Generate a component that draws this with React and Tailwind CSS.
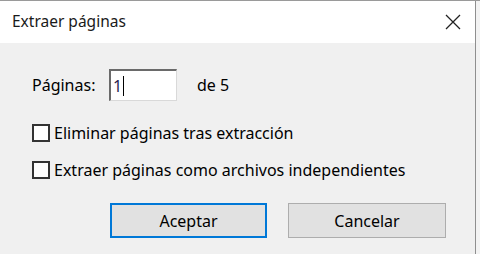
import React from "react";

const font = { fontFamily: '"Noto Sans", "Open Sans", sans-serif' };

function Check({ label }) {
  return (
    <div className="flex items-center h-[20px]">
      <div className="w-[18px] h-[18px] border-[2px] border-[#333333] bg-white shrink-0" />
      <span className="ml-[4px] text-[16px] leading-[20px] text-black">{label}</span>
    </div>
  );
}

export default function App() {
  return (
    <div className="w-[480px] h-[254px] bg-[#f3f3f3] border-t border-[#9a9a9a] flex overflow-hidden" style={font}>
      <div className="w-[476px] h-full border-r border-[#8f8f8f] flex flex-col bg-[#f0f0f0]">
        <div className="h-[42px] bg-white flex items-center justify-between pl-[12px] pr-[14px] shrink-0">
          <span className="text-[15.5px] text-[#1a1a1a]">Extraer páginas</span>
          <svg width="16" height="16" viewBox="0 0 16 16">
            <path d="M1 1 L15 15 M15 1 L1 15" stroke="#222" strokeWidth="1.3" fill="none" />
          </svg>
        </div>
        <div className="flex flex-col pl-[32px] pt-[26px]">
          <div className="flex items-center h-[32px]">
            <span className="w-[77px] text-[16px] text-black">Páginas:</span>
            <div className="w-[68px] h-[32px] bg-white border-t-[2px] border-l-[2px] border-r border-b border-t-[#6a6a6a] border-l-[#6a6a6a] border-r-[#d9d9d9] border-b-[#d9d9d9] flex items-center pl-[2px]">
              <span className="text-[16px] text-[#2b1f4f] leading-[20px]">1</span>
              <span className="w-[1px] h-[20px] bg-black ml-[1px]" />
            </div>
            <span className="ml-[20px] text-[16px] text-black">de 5</span>
          </div>
          <div className="mt-[22px]">
            <Check label="Eliminar páginas tras extracción" />
          </div>
          <div className="mt-[17px]">
            <Check label="Extraer páginas como archivos independientes" />
          </div>
          <div className="mt-[23px] ml-[78px] flex gap-[21px]">
            <button className="w-[157px] h-[35px] bg-[#e1e1e1] border-[2px] border-[#0078d7] text-[16px] text-black">Aceptar</button>
            <button className="w-[158px] h-[35px] bg-[#e1e1e1] border border-[#adadad] text-[16px] text-black">Cancelar</button>
          </div>
        </div>
      </div>
    </div>
  );
}
